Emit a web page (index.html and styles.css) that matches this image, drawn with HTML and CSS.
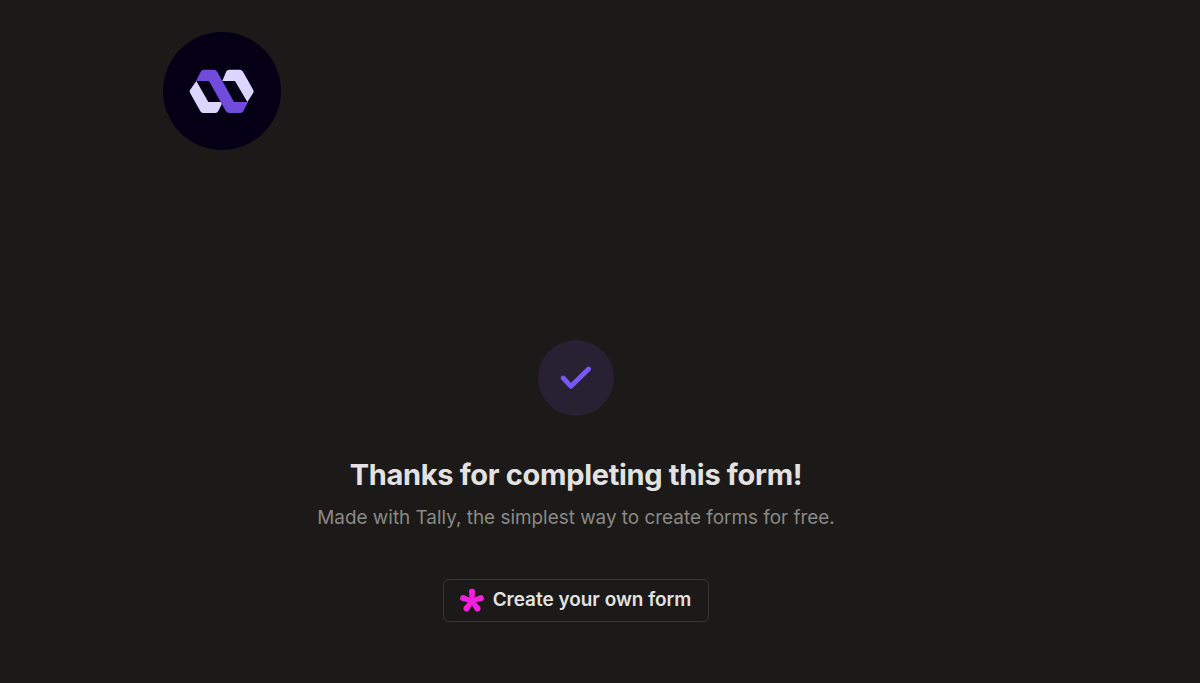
FILE: index.html
```html
<!DOCTYPE html>
<html lang="en">
<head>
  <meta charset="UTF-8" />
  <meta name="viewport" content="width=device-width, initial-scale=1.0" />
  <title>Thanks for completing this form!</title>
  <link rel="stylesheet" href="styles.css">
</head>
<body>
  <main class="container">
    <!-- Logo -->
    <div class="logo">
      <svg viewBox="24 21 354 354" aria-hidden="true">
        <path class="logo-light" d="M124 168 L160 231 H196 Q202 232 199 240 L190 258 Q187 264 181 264 H144 Q139 264 136 259 L105 203 Q103 199 105 195 Z" />
        <path class="logo-light" d="M202 168 L214 139 Q217 134 223 134 H255 Q260 134 263 139 L295 195 Q297 199 295 203 L277 231 L240 168 Z" />
        <path class="logo-purple" d="M123 168 L138 139 Q141 134 147 134 H176 Q183 134 187 141 L237 231 H279 L265 259 Q262 264 256 264 H223 Q216 264 212 257 L162 168 Z" />
      </svg>
    </div>

    <!-- Thank you message -->
    <section class="thank-you">
      <div class="check">
        <svg viewBox="0 0 32 32" aria-hidden="true">
          <path d="M3.2 16 L11 24.3 L28.6 7" />
        </svg>
      </div>
      <h1 class="title">Thanks for completing this form!</h1>
      <p class="subtitle">Made with Tally, the simplest way to create forms for free.</p>
      <a class="create-btn" href="#">
        <svg viewBox="-12 -12 24 24" aria-hidden="true">
          <defs>
            <path id="petal" d="M-2 1 L-3.1 -9.2 A3.1 3.1 0 0 1 3.1 -9.2 L2 1 Z" />
          </defs>
          <use href="#petal" />
          <use href="#petal" transform="rotate(72)" />
          <use href="#petal" transform="rotate(144)" />
          <use href="#petal" transform="rotate(216)" />
          <use href="#petal" transform="rotate(288)" />
        </svg>
        <span>Create your own form</span>
      </a>
    </section>
  </main>
</body>
</html>
```
FILE: styles.css
```css
* {
  margin: 0;
  padding: 0;
  box-sizing: border-box;
}

body {
  min-height: 100vh;
  background: #1b1a18;
  color: #e3e2e0;
  font-family: Inter, "Liberation Sans", sans-serif;
}

.container {
  width: 826px;
  margin-left: 163px;
  padding-top: 32px;
}

.logo {
  width: 118px;
  height: 118px;
  border-radius: 50%;
  background: #060016;
}

.logo svg {
  display: block;
  width: 100%;
  height: 100%;
}

.logo-light {
  fill: #dcd5fe;
}

.logo-purple {
  fill: #704bdc;
}

.thank-you {
  display: flex;
  flex-direction: column;
  align-items: center;
  margin-top: 190px;
}

.check {
  display: flex;
  align-items: center;
  justify-content: center;
  width: 76px;
  height: 76px;
  border-radius: 50%;
  background: #272133;
}

.check svg {
  width: 32px;
  height: 32px;
  fill: none;
  stroke: #7857fb;
  stroke-width: 4.8;
  stroke-linecap: round;
  stroke-linejoin: round;
}

.title {
  margin-top: 40px;
  font-size: 29px;
  font-weight: 700;
  line-height: 38px;
  letter-spacing: -0.32px;
}

.subtitle {
  margin-top: 10px;
  font-size: 18.9px;
  line-height: 28px;
  color: #8a8986;
}

.create-btn {
  display: flex;
  align-items: center;
  gap: 9px;
  height: 43px;
  margin-top: 47px;
  padding: 0 17px 0 16px;
  border: 1px solid #373634;
  border-radius: 6px;
  color: #e3e2e0;
  font-size: 18.95px;
  font-weight: 600;
  text-decoration: none;
}

.create-btn span {
  padding-bottom: 2px;
}

.create-btn svg {
  width: 24px;
  height: 24px;
  overflow: visible;
  fill: #f51fe0;
}
```
